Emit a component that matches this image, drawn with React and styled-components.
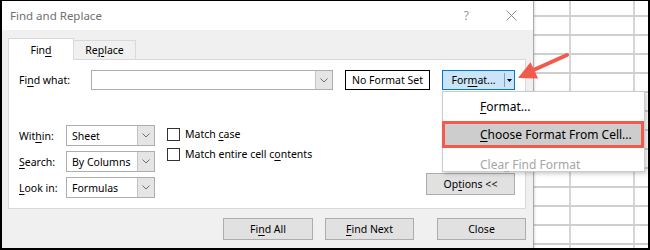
import React from 'react';
import styled, { createGlobalStyle } from 'styled-components';

// Page reset and base font
const GlobalStyle = createGlobalStyle`
  html, body {
    margin: 0;
    padding: 0;
    background: #ffffff;
  }
  body {
    font-family: "Noto Sans", "Segoe UI", sans-serif;
    color: #000000;
  }
`;

const Frame = styled.div`
  position: relative;
  display: flex;
  width: 650px;
  height: 250px;
  box-sizing: border-box;
  border: 2px solid #000000;
  border-top-width: 1px;
  overflow: hidden;
  font-size: 10.5px;
`;

const Dialog = styled.div`
  display: flex;
  flex-direction: column;
  width: 532px;
  flex-shrink: 0;
  box-sizing: border-box;
  border-right: 1px solid #a9a9a9;
  box-shadow: 1px 0 2px rgba(0, 0, 0, 0.12);
  position: relative;
  z-index: 1;
`;

const TitleBar = styled.div`
  display: flex;
  align-items: center;
  height: 29px;
  padding-left: 8px;
  background: #ffffff;
`;

const Title = styled.div`
  flex: 1;
  font-size: 11.5px;
  color: #707070;
`;

const HelpMark = styled.span`
  font-size: 12px;
  color: #9a9a9a;
  margin-right: 37px;
`;

const CloseMark = styled.svg`
  width: 11px;
  height: 11px;
  margin-right: 16px;
`;

const Body = styled.div`
  flex: 1;
  display: flex;
  flex-direction: column;
  background: #f0f0f0;
  padding: 8px 7px 0 6px;
`;

const Tabs = styled.div`
  display: flex;
  align-items: flex-end;
  height: 21px;
`;

const Tab = styled.div`
  display: flex;
  align-items: center;
  justify-content: center;
  box-sizing: border-box;
  width: ${p => (p.$active ? 66 : 62)}px;
  height: ${p => (p.$active ? 22 : 19)}px;
  margin-bottom: ${p => (p.$active ? -1 : 0)}px;
  background: ${p => (p.$active ? '#ffffff' : '#f0f0f0')};
  border: 1px solid #d9d9d9;
  border-bottom: none;
  border-left: ${p => (p.$active ? '1px solid #d9d9d9' : 'none')};
  position: relative;
  z-index: ${p => (p.$active ? 2 : 0)};
`;

const Key = styled.span`
  text-decoration: underline;
  text-underline-offset: 2px;
`;

const Panel = styled.div`
  display: flex;
  flex-direction: column;
  height: 150px;
  box-sizing: border-box;
  background: #ffffff;
  border: 1px solid #d9d9d9;
  padding: 10px 10px 0 10px;
`;

const FindRow = styled.div`
  display: flex;
  align-items: center;
  height: 20px;
`;

const Label = styled.div`
  width: ${p => p.$width}px;
  flex-shrink: 0;
`;

const Combo = styled.div`
  display: flex;
  width: ${p => p.$width}px;
  height: ${p => p.$height}px;
  box-sizing: border-box;
  border: 1px solid #adadad;
  background: #ffffff;
`;

const ComboText = styled.div`
  flex: 1;
  display: flex;
  align-items: center;
  padding-left: 5px;
`;

const ComboArrow = styled.div`
  display: flex;
  align-items: center;
  justify-content: center;
  width: 16px;
  background: #e5e5e5;
  border-left: 1px solid #c4c4c4;
`;

const FormatBox = styled.div`
  display: flex;
  align-items: center;
  justify-content: center;
  width: 85px;
  height: 20px;
  box-sizing: border-box;
  margin-left: 12px;
  border: 1px solid #000000;
`;

const SplitWrap = styled.div`
  position: relative;
  margin-left: 12px;
`;

const SplitButton = styled.div`
  display: flex;
  width: 73px;
  height: 20px;
  box-sizing: border-box;
  background: #cce4f7;
  border: 1px solid #0078d7;
`;

const SplitMain = styled.div`
  flex: 1;
  display: flex;
  align-items: center;
  justify-content: center;
  border-right: 1px solid #8a9fb2;
  margin: 2px 0;
`;

const SplitArrow = styled.div`
  width: 9px;
  display: flex;
  align-items: center;
  justify-content: center;
`;

const Menu = styled.div`
  position: absolute;
  top: 21px;
  left: 0;
  width: 203px;
  height: 81px;
  box-sizing: border-box;
  display: flex;
  flex-direction: column;
  background: #ffffff;
  border: 1px solid #cccccc;
  box-shadow: 2px 2px 4px rgba(0, 0, 0, 0.2);
  font-size: 12px;
  white-space: nowrap;
  z-index: 5;
`;

const MenuItem = styled.div`
  display: flex;
  align-items: center;
  box-sizing: border-box;
  height: ${p => p.$height}px;
  padding-top: ${p => p.$offset || 0}px;
  padding-left: ${p => (p.$hot ? 35 : 37)}px;
  margin-left: ${p => (p.$hot ? -1 : 0)}px;
  color: ${p => (p.$disabled ? '#a6a6a6' : '#000000')};
  background: ${p => (p.$hot ? '#cdcdcd' : 'transparent')};
  border: ${p => (p.$hot ? '3px solid #f25b4b' : 'none')};
`;

const Lower = styled.div`
  display: flex;
  margin-top: 35px;
`;

const OptionGrid = styled.div`
  display: grid;
  grid-template-columns: 47px 89px;
  grid-auto-rows: 21px;
  row-gap: 5px;
  align-items: center;
`;

const Checks = styled.div`
  display: flex;
  flex-direction: column;
  gap: 6px;
  margin-left: 12px;
  padding-top: 2px;
`;

const CheckRow = styled.div`
  display: flex;
  align-items: center;
  height: 14px;
`;

const CheckBox = styled.div`
  width: 13px;
  height: 13px;
  box-sizing: border-box;
  margin-right: 5px;
  border: 1px solid #333333;
  background: #ffffff;
`;

const Button = styled.div`
  display: flex;
  align-items: center;
  justify-content: center;
  width: ${p => p.$width || 89}px;
  height: 22px;
  box-sizing: border-box;
  background: #e1e1e1;
  border: 1px solid #adadad;
  margin-left: ${p => p.$gap || 0}px;
`;

const OptionsButton = styled(Button)`
  margin-left: auto;
  align-self: flex-end;
  margin-bottom: 3px;
`;

const ButtonRow = styled.div`
  display: flex;
  justify-content: flex-end;
  margin-top: 9px;
`;

// Spreadsheet cells visible behind the dialog: rows with a top rule,
// column rules drawn by the sheet background
const Sheet = styled.div`
  flex: 1;
  display: flex;
  flex-direction: column;
  padding-top: 14px;
  background-color: #ffffff;
  background-image: linear-gradient(to right, #d6d6d6 0, #d6d6d6 2px, transparent 2px);
  background-size: 64px 100%;
  background-position: 35px 0;
`;

const SheetRow = styled.div`
  flex-shrink: 0;
  height: 19px;
  box-sizing: border-box;
  border-top: 2px solid #cfcfcf;
`;

const Arrow = styled.svg`
  position: absolute;
  left: 508px;
  top: 47px;
  width: 64px;
  height: 40px;
  z-index: 6;
`;

const Chevron = () => (
  <svg width="8" height="5" viewBox="0 0 8 5">
    <path d="M0.5 0.5 L4 4 L7.5 0.5" fill="none" stroke="#6e6e6e" strokeWidth="1" />
  </svg>
);

const Select = ({ value }) => (
  <Combo $width={89} $height={21}>
    <ComboText>{value}</ComboText>
    <ComboArrow><Chevron /></ComboArrow>
  </Combo>
);

const App = () => (
  <>
    <GlobalStyle />
    <Frame>
      <Dialog>
        <TitleBar>
          <Title>Find and Replace</Title>
          <HelpMark>?</HelpMark>
          <CloseMark viewBox="0 0 11 11">
            <path d="M0.5 0.5 L10.5 10.5 M10.5 0.5 L0.5 10.5" stroke="#8c8c8c" strokeWidth="1" />
          </CloseMark>
        </TitleBar>
        <Body>
          <Tabs>
            <Tab $active><span>Fin<Key>d</Key></span></Tab>
            <Tab><span>Re<Key>p</Key>lace</span></Tab>
          </Tabs>
          <Panel>
            <FindRow>
              <Label $width={72}>Fi<Key>n</Key>d what:</Label>
              <Combo $width={242} $height={20}>
                <ComboText />
                <ComboArrow><Chevron /></ComboArrow>
              </Combo>
              <FormatBox>No Format Set</FormatBox>
              <SplitWrap>
                <SplitButton>
                  <SplitMain><span>For<Key>m</Key>at...</span></SplitMain>
                  <SplitArrow>
                    <svg width="5" height="3" viewBox="0 0 5 3">
                      <path d="M0 0 H5 L2.5 3 Z" fill="#000" />
                    </svg>
                  </SplitArrow>
                </SplitButton>
                <Menu>
                  <MenuItem $height={29}><span><Key>F</Key>ormat...</span></MenuItem>
                  <MenuItem $height={27} $hot><span><Key>C</Key>hoose Format From Cell...</span></MenuItem>
                  <MenuItem $height={23} $offset={9} $disabled><span>Clea<Key>r</Key> Find Format</span></MenuItem>
                </Menu>
              </SplitWrap>
            </FindRow>
            <Lower>
              <OptionGrid>
                <Label>Wit<Key>h</Key>in:</Label>
                <Select value="Sheet" />
                <Label><Key>S</Key>earch:</Label>
                <Select value="By Columns" />
                <Label><Key>L</Key>ook in:</Label>
                <Select value="Formulas" />
              </OptionGrid>
              <Checks>
                <CheckRow><CheckBox /><span>Match <Key>c</Key>ase</span></CheckRow>
                <CheckRow><CheckBox /><span>Match entire cell c<Key>o</Key>ntents</span></CheckRow>
              </Checks>
              <OptionsButton><span>Op<Key>t</Key>ions &lt;&lt;</span></OptionsButton>
            </Lower>
          </Panel>
          <ButtonRow>
            <Button $width={90}><span>Fi<Key>n</Key>d All</span></Button>
            <Button $gap={12}><span><Key>F</Key>ind Next</span></Button>
            <Button $gap={23}>Close</Button>
          </ButtonRow>
        </Body>
      </Dialog>
      <Sheet>
        {Array.from({ length: 13 }, (_, i) => <SheetRow key={i} />)}
      </Sheet>
      <Arrow viewBox="0 0 64 40">
        <line x1="57" y1="7" x2="23" y2="22.3" stroke="#f25b4b" strokeWidth="4" strokeLinecap="round" />
        <polygon points="8,30 28.1,30.5 20.5,14.2" fill="#f25b4b" />
      </Arrow>
    </Frame>
  </>
);

export default App;
